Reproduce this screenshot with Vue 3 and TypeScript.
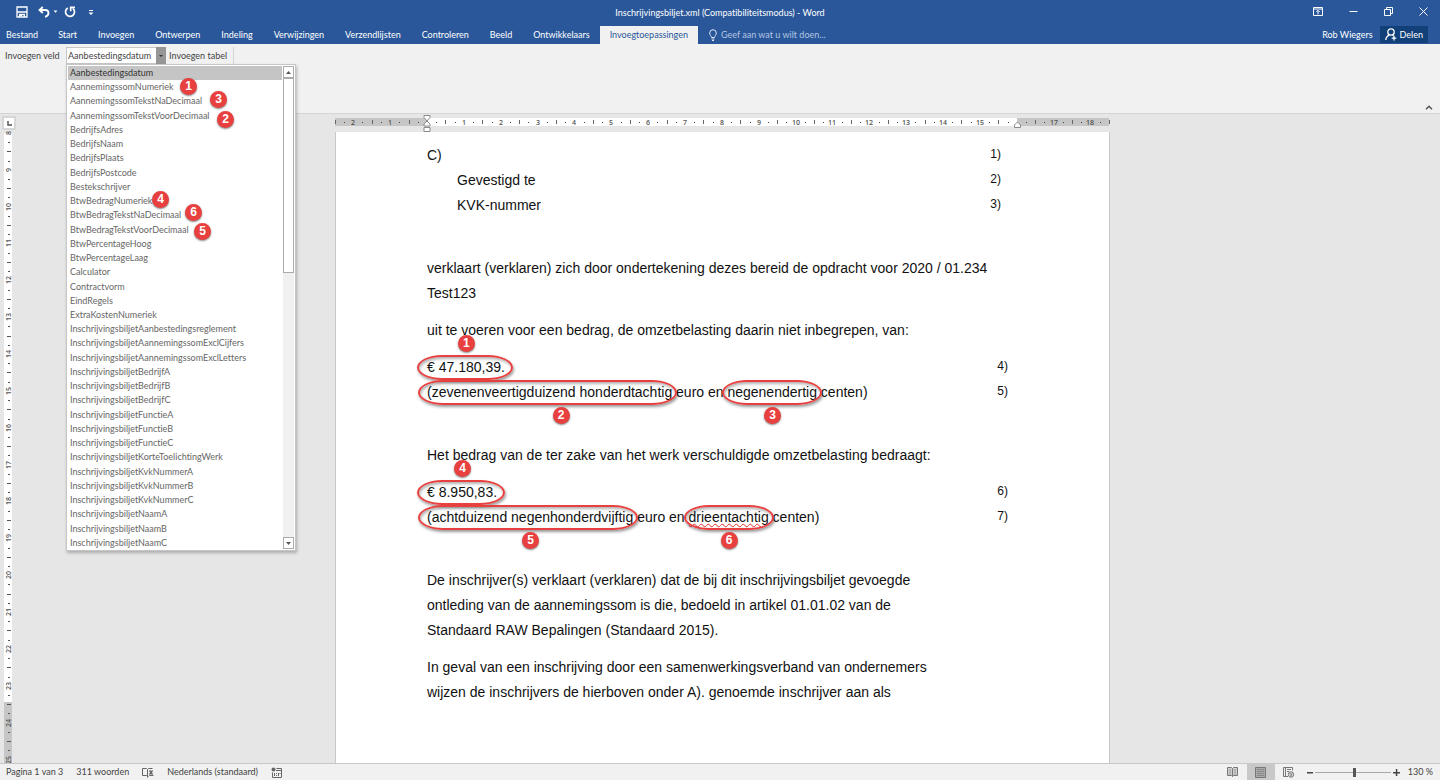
<script setup lang="ts">
import { ref } from 'vue'

interface Badge {
  n: number
  x: number
  y: number
}
interface Field {
  name: string
  badge?: Badge
}

const tabs: string[] = [
  'Bestand', 'Start', 'Invoegen', 'Ontwerpen', 'Indeling', 'Verwijzingen',
  'Verzendlijsten', 'Controleren', 'Beeld', 'Ontwikkelaars', 'Invoegtoepassingen',
]
const activeTab = ref('Invoegtoepassingen')

const fields: Field[] = [
  { name: 'Aanbestedingsdatum' },
  { name: 'AannemingssomNumeriek', badge: { n: 1, x: 112, y: -1 } },
  { name: 'AannemingssomTekstNaDecimaal', badge: { n: 3, x: 142, y: -2 } },
  { name: 'AannemingssomTekstVoorDecimaal', badge: { n: 2, x: 149, y: 3 } },
  { name: 'BedrijfsAdres' },
  { name: 'BedrijfsNaam' },
  { name: 'BedrijfsPlaats' },
  { name: 'BedrijfsPostcode' },
  { name: 'Bestekschrijver' },
  { name: 'BtwBedragNumeriek', badge: { n: 4, x: 84, y: -2 } },
  { name: 'BtwBedragTekstNaDecimaal', badge: { n: 6, x: 117, y: -3 } },
  { name: 'BtwBedragTekstVoorDecimaal', badge: { n: 5, x: 126, y: 1 } },
  { name: 'BtwPercentageHoog' },
  { name: 'BtwPercentageLaag' },
  { name: 'Calculator' },
  { name: 'Contractvorm' },
  { name: 'EindRegels' },
  { name: 'ExtraKostenNumeriek' },
  { name: 'InschrijvingsbiljetAanbestedingsreglement' },
  { name: 'InschrijvingsbiljetAannemingssomExclCijfers' },
  { name: 'InschrijvingsbiljetAannemingssomExclLetters' },
  { name: 'InschrijvingsbiljetBedrijfA' },
  { name: 'InschrijvingsbiljetBedrijfB' },
  { name: 'InschrijvingsbiljetBedrijfC' },
  { name: 'InschrijvingsbiljetFunctieA' },
  { name: 'InschrijvingsbiljetFunctieB' },
  { name: 'InschrijvingsbiljetFunctieC' },
  { name: 'InschrijvingsbiljetKorteToelichtingWerk' },
  { name: 'InschrijvingsbiljetKvkNummerA' },
  { name: 'InschrijvingsbiljetKvkNummerB' },
  { name: 'InschrijvingsbiljetKvkNummerC' },
  { name: 'InschrijvingsbiljetNaamA' },
  { name: 'InschrijvingsbiljetNaamB' },
  { name: 'InschrijvingsbiljetNaamC' },
]
const selected = ref('Aanbestedingsdatum')
const zoom = ref(52)

// One centimetre on the rulers at the current zoom level.
const CM = 36.86

interface Tick {
  pos: number
  kind: 'label' | 'half' | 'dot'
  text: string
}

function ticks(from: number, to: number, origin: number, skip: number[]): Tick[] {
  const out: Tick[] = []
  for (let q = from * 4; q <= to * 4; q++) {
    const value = q / 4
    if (skip.includes(value)) continue
    const kind = q % 4 === 0 ? 'label' : q % 2 === 0 ? 'half' : 'dot'
    out.push({ pos: Math.round(origin + value * CM), kind, text: String(Math.abs(value)) })
  }
  return out
}

const hTicks = ticks(-2.5, 18.5, 92, [0, 16])
const vTicks = ticks(8, 25, -295, [])
</script>

<template>
  <div class="app">
    <header class="chrome">
      <div class="titlebar">
        <div class="quick">
          <button aria-label="Opslaan">
            <svg width="12" height="12" viewBox="0 0 12 12" fill="none" stroke="#fff" stroke-width="1.3">
              <path d="M1 1h10v10H1zM1 6h10" /><path d="M3.600 11V8.500h4.800V11" /><path d="M4 9.500h2" />
            </svg>
          </button>
          <button aria-label="Ongedaan maken" class="undo">
            <svg width="20" height="12" viewBox="0 0 20 12" fill="none" stroke="#fff" stroke-width="1.800">
              <path d="M4.800 1L1.500 4l3.300 3M1.800 4h5.500c2 0 3.200 1.300 3.200 3 0 2-1.500 3.300-3.500 3.800" />
              <path d="M15.500 4.500h4l-2 2.200z" fill="#fff" stroke="none" />
            </svg>
          </button>
          <button aria-label="Opnieuw">
            <svg width="12" height="12" viewBox="0 0 12 12" fill="none" stroke="#fff" stroke-width="1.700">
              <path d="M3.800 1.900a4.500 4.500 0 1 0 5 .4" /><path d="M6.700 5.200V1.300h4.300" />
            </svg>
          </button>
          <button aria-label="Werkbalk aanpassen" class="more">
            <svg width="6" height="6" viewBox="0 0 6 6" fill="#fff"><path d="M1 0h4v1H1zM.5 2.500h5L3 5z" /></svg>
          </button>
        </div>
        <h1>Inschrijvingsbiljet.xml (Compatibiliteitsmodus) - Word</h1>
        <div class="window">
          <button aria-label="Weergaveopties voor lint">
            <svg width="10" height="9" viewBox="0 0 10 9" fill="none" stroke="#fff">
              <path d="M.5.5h9v8h-9zM.5 2h9M5 7.500V3.500M3.300 5L5 3.300 6.700 5" />
            </svg>
          </button>
          <button aria-label="Minimaliseren">
            <svg width="9" height="9" viewBox="0 0 9 9" stroke="#fff"><path d="M.5 4.500h8" /></svg>
          </button>
          <button aria-label="Verkleinen">
            <svg width="9" height="9" viewBox="0 0 9 9" fill="none" stroke="#fff">
              <path d="M.5 2.500h6v6h-6zM2.500 2.500v-2h6v6h-2" />
            </svg>
          </button>
          <button aria-label="Sluiten">
            <svg width="9" height="9" viewBox="0 0 9 9" stroke="#fff"><path d="M.5.5l8 8M8.500.5l-8 8" /></svg>
          </button>
        </div>
      </div>
      <nav class="tabs">
        <button v-for="t in tabs" :key="t" :class="{ active: t === activeTab }" @click="activeTab = t">{{ t }}</button>
        <label class="tellme">
          <svg width="8" height="12" viewBox="0 0 8 12" fill="none" stroke="#dbe4f2">
            <path d="M2.500 8.500C2.500 7 .7 6.300.7 4a3.300 3.300 0 0 1 6.600 0c0 2.300-1.800 3-1.800 4.500zM2.500 10h3M3 11.500h2" />
          </svg>
          <input type="text" placeholder="Geef aan wat u wilt doen..." />
        </label>
        <button class="user">Rob Wiegers</button>
        <button class="share">
          <svg width="12" height="13" viewBox="0 0 12 13" fill="none" stroke="#fff" stroke-width="1.300">
            <circle cx="6" cy="4" r="3.200" /><path d="M.8 12c.2-2.600 1.500-4.200 3.500-4.900M7.500 7l1 .6M9 7.800v4.600M6.700 10.100h4.600" />
          </svg>
          Delen
        </button>
      </nav>
    </header>

    <section class="ribbon">
      <label for="field">Invoegen veld</label>
      <div class="combo">
        <select id="field" v-model="selected">
          <option v-for="f in fields" :key="f.name">{{ f.name }}</option>
        </select>
        <span class="drop"></span>
        <div class="popup">
          <ul role="listbox" aria-label="Velden">
            <li
              v-for="f in fields"
              :key="f.name"
              role="option"
              :aria-selected="f.name === selected"
              :class="{ chosen: f.name === selected }"
              @click="selected = f.name"
            >
              {{ f.name }}
              <span v-if="f.badge" class="badge" :style="{ left: f.badge.x + 'px', top: f.badge.y - 1 + 'px' }">{{ f.badge.n }}</span>
            </li>
          </ul>
          <div class="scroll">
            <button aria-label="Omhoog"><svg width="5" height="3" viewBox="0 0 5 3"><path d="M0 3h5L2.500 0z" fill="#555" /></svg></button>
            <div class="thumb"></div>
            <button aria-label="Omlaag"><svg width="5" height="3" viewBox="0 0 5 3"><path d="M0 0h5L2.500 3z" fill="#555" /></svg></button>
          </div>
        </div>
      </div>
      <button class="table-btn">Invoegen tabel</button>
      <button class="collapse" aria-label="Lint samenvouwen">
        <svg width="8" height="5" viewBox="0 0 8 5" fill="none" stroke="#555" stroke-width="1.500"><path d="M1 4.300l3-3 3 3" /></svg>
      </button>
    </section>

    <main class="work">
      <aside class="side">
        <button class="tabstop" aria-label="Tabstop">
          <svg width="5" height="5" viewBox="0 0 5 5" fill="none" stroke="#555" stroke-width="1.500"><path d="M1 0v4h4" /></svg>
        </button>
        <svg class="vruler" width="9" height="100%">
          <rect x="0" y="0" width="8" height="569" fill="#fff" />
          <rect x="0" y="569" width="8" height="100" fill="#c6c6c6" />
          <template v-for="t in vTicks" :key="t.pos">
            <text v-if="t.kind === 'label'" :transform="`translate(7 ${t.pos}) rotate(-90)`" text-anchor="middle">{{ t.text }}</text>
            <rect v-else-if="t.kind === 'half'" x="3" :y="t.pos" width="4" height="1" fill="#555" />
            <rect v-else x="4" :y="t.pos" width="2" height="1" fill="#555" />
          </template>
        </svg>
      </aside>
      <div class="stage">
        <svg class="hruler" width="775" height="18" viewBox="0 0 775 18">
          <rect x="0" y="4" width="92" height="8" fill="#c6c6c6" />
          <rect x="92" y="4" width="590" height="8" fill="#fff" />
          <rect x="682" y="4" width="92" height="8" fill="#c6c6c6" />
          <template v-for="t in hTicks" :key="t.pos">
            <text v-if="t.kind === 'label'" :x="t.pos" y="11" text-anchor="middle">{{ t.text }}</text>
            <rect v-else-if="t.kind === 'half'" :x="t.pos" y="6" width="1" height="4" fill="#666" />
            <rect v-else :x="t.pos" y="8" width="1" height="1" fill="#444" />
          </template>
          <g fill="#fff" stroke="#8a8a8a">
            <path d="M89 1.500h6v2L92 7l3 3v2h-6v-2l3-3-3-3.500zM89 13.500h6v4h-6z" />
            <path d="M679.500 13.500v-2.500l3-3 3 3v2.500z" />
          </g>
        </svg>
        <article class="page">
          <section>
            <p><span>C)</span><span class="no near">1)</span></p>
            <p class="indent"><span>Gevestigd te</span><span class="no near">2)</span></p>
            <p class="indent"><span>KVK-nummer</span><span class="no near">3)</span></p>
          </section>
          <section class="far">
            <p>verklaart (verklaren) zich door ondertekening dezes bereid de opdracht voor 2020 / 01.234</p>
            <p>Test123</p>
          </section>
          <section>
            <p>uit te voeren voor een bedrag, de omzetbelasting daarin niet inbegrepen, van:</p>
          </section>
          <section>
            <p><span><mark class="amount">€ 47.180,39.<b class="badge above">1</b></mark></span><span class="no">4)</span></p>
            <p>
              <span><mark class="start">(zevenenveertigduizend honderdtachtig<b class="badge below aside">2</b></mark> euro en <mark>negenendertig<b class="badge below">3</b></mark> centen)</span>
              <span class="no">5)</span>
            </p>
          </section>
          <section class="far">
            <p>Het bedrag van de ter zake van het werk verschuldigde omzetbelasting bedraagt:</p>
          </section>
          <section>
            <p><span><mark class="amount">€ 8.950,83.<b class="badge above">4</b></mark></span><span class="no">6)</span></p>
            <p>
              <span><mark class="start">(achtduizend negenhonderdvijftig<b class="badge below">5</b></mark> euro en <mark><u>drieentachtig</u><b class="badge below">6</b></mark> centen)</span>
              <span class="no">7)</span>
            </p>
          </section>
          <section class="far">
            <p>De inschrijver(s) verklaart (verklaren) dat de bij dit inschrijvingsbiljet gevoegde</p>
            <p>ontleding van de aannemingssom is die, bedoeld in artikel 01.01.02 van de</p>
            <p>Standaard RAW Bepalingen (Standaard 2015).</p>
          </section>
          <section>
            <p>In geval van een inschrijving door een samenwerkingsverband van ondernemers</p>
            <p>wijzen de inschrijvers de hierboven onder A). genoemde inschrijver aan als</p>
          </section>
        </article>
      </div>
    </main>

    <footer class="status">
      <button>Pagina 1 van 3</button>
      <button>311 woorden</button>
      <button aria-label="Spellingcontrole">
        <svg width="12" height="11" viewBox="0 0 12 11" fill="none" stroke="#666">
          <path d="M5.500 9.500L4.500 8.500h-4v-7h4l1 1 1-1h4M5.500 2.500v8M6.500 9.500l1-1h4" /><path d="M7.500 3.500l3 4M10.500 3.500l-3 4" stroke-width="1.400" />
        </svg>
      </button>
      <button>Nederlands (standaard)</button>
      <button aria-label="Macro opnemen">
        <svg width="11" height="11" viewBox="0 0 11 11" fill="none" stroke="#666">
          <circle cx="2.500" cy="2.500" r="2" fill="#666" stroke="none" />
          <path d="M5.500 1.500h5v9h-9v-5M5 3.500h5.500M3.500 6v3M5.500 6v1M5.500 8v1M7.500 6v3M9 6v1" />
        </svg>
      </button>
      <div class="views">
        <button aria-label="Leesmodus">
          <svg width="11" height="10" viewBox="0 0 11 10" fill="#cfcfcf" stroke="#777">
            <path d="M5.500 1.500l-1-1h-4v8h4l1 1 1-1h4v-8h-4zM5.500 1.500v8" /><path d="M2 3h2M2 5h2M2 7h2M7 3h2M7 5h2M7 7h2" stroke="#999" />
          </svg>
        </button>
        <button aria-label="Afdrukweergave" class="on">
          <svg width="11" height="11" viewBox="0 0 11 11" fill="#aaa" stroke="#777">
            <path d="M.5.5h10v10H.5z" /><path d="M2 2.500h7M2 4.500h7M2 6.500h7M2 8.500h7" stroke="#888" />
          </svg>
        </button>
        <button aria-label="Weblay-out">
          <svg width="12" height="11" viewBox="0 0 12 11" fill="none" stroke="#777">
            <path d="M5 9.500H.5v-9h9v3M2.500 1v8M4 2.500h4M4 4.500h2" /><circle cx="8" cy="7.500" r="2.700" fill="#ddd" /><path d="M6.500 6l1.500 1.500 1.500-.5M8 7.500v2" />
          </svg>
        </button>
      </div>
      <div class="zoom">
        <button aria-label="Uitzoomen"><svg width="6" height="7" viewBox="0 0 6 7"><path d="M0 3h6v1.500H0z" fill="#444" /></svg></button>
        <input v-model="zoom" type="range" min="0" max="100" aria-label="Zoomen" />
        <button aria-label="Inzoomen"><svg width="7" height="7" viewBox="0 0 7 7"><path d="M0 3h7v1.500H0zM2.800 0h1.500v7H2.800z" fill="#444" /></svg></button>
        <button class="pct">130 %</button>
      </div>
    </footer>
  </div>
</template>

<style>
body {
  margin: 0;
}
</style>

<style scoped>
.app {
  display: flex;
  flex-direction: column;
  height: 100vh;
  overflow: hidden;
  background: #e6e6e6;
  font-family: Lato, "Open Sans", sans-serif;
  font-size: 9px;
  font-variant-ligatures: none;
  line-height: 14px;
  color: #444;
}
button {
  margin: 0;
  padding: 0;
  border: 0;
  background: none;
  font: inherit;
  font-variant-ligatures: none;
  color: inherit;
  white-space: nowrap;
}
svg {
  display: block;
}
.chrome {
  flex: none;
  background: #2a579a;
  color: #fff;
}
.titlebar {
  display: grid;
  grid-template-columns: 1fr auto 1fr;
  align-items: center;
  height: 26px;
}
.titlebar h1 {
  margin: 0;
  font-size: 9px;
  font-weight: 400;
}
.quick {
  display: flex;
  align-items: center;
  gap: 10px;
  padding: 0 0 3px 16px;
}
.undo {
  margin-right: -4px;
}
.more {
  margin: 3px 0 0 2px;
}
.window {
  display: flex;
  justify-content: flex-end;
  align-items: center;
  gap: 26px;
  padding: 0 12px 4px 0;
}
.tabs {
  display: flex;
  height: 18px;
}
.tabs > button {
  padding: 0 10px 0 11px;
}
.tabs > button:first-child {
  padding: 0 9px 0 6px;
}
.tabs > button.active {
  padding: 0 10px;
  background: #f1f1f1;
  color: #2a579a;
}
.tellme {
  display: flex;
  align-items: center;
  gap: 4px;
  flex: 1;
  padding-left: 11px;
}
.tellme input {
  width: 140px;
  padding: 0;
  border: 0;
  background: none;
  outline: none;
  font: inherit;
  color: #fff;
}
.tellme input::placeholder {
  color: #b4c6e2;
  opacity: 1;
}
.tabs > .user {
  padding: 0 7px;
}
.tabs > .share {
  display: flex;
  align-items: center;
  gap: 3px;
  margin: 0 12px 1px 0;
  padding: 0 5px;
  background: #124078;
}
.ribbon {
  display: flex;
  align-items: flex-start;
  flex: none;
  height: 66px;
  padding: 3px 7px 0 5px;
  border-bottom: 1px solid #d5d5d5;
  background: #f1f1f1;
}
.ribbon > label {
  width: 61px;
  line-height: 17px;
}
.combo {
  position: relative;
  width: 100px;
  height: 17px;
}
.combo select {
  display: block;
  width: 100%;
  height: 17px;
  padding: 0 10px 0 1px;
  border: 1px solid #c6c6c6;
  border-radius: 0;
  appearance: none;
  background: #fff;
  font: inherit;
  color: #444;
}
.drop {
  position: absolute;
  top: 0;
  right: 0;
  width: 10px;
  height: 17px;
  background: #969696;
  pointer-events: none;
}
.drop::after {
  content: "";
  position: absolute;
  top: 8px;
  left: 3px;
  border: 2px solid transparent;
  border-top-color: #333;
}
.popup {
  position: absolute;
  z-index: 5;
  top: 17px;
  left: 0;
  display: flex;
  width: 228px;
  border: 1px solid #c6c6c6;
  background: #fff;
  box-shadow: 1px 2px 3px rgba(0, 0, 0, 0.25);
}
.popup ul {
  display: grid;
  grid-auto-rows: 1fr;
  flex: 1;
  height: 484px;
  margin: 0;
  padding: 1px 0 0 1px;
  list-style: none;
}
.popup li {
  position: relative;
  padding-left: 2px;
  color: #666;
}
.popup li.chosen {
  background: #c5c5c5;
  color: #333;
}
.scroll {
  display: flex;
  flex-direction: column;
  width: 11px;
  margin: 1px;
  background: #f0f0f0;
}
.scroll button {
  display: flex;
  align-items: center;
  justify-content: center;
  height: 12px;
  border: 1px solid #ababab;
  background: #fff;
}
.scroll button:last-child {
  margin-top: auto;
}
.thumb {
  height: 40%;
  border: 1px solid #ababab;
  background: #fff;
}
.badge {
  position: absolute;
  z-index: 2;
  width: 17px;
  height: 17px;
  border-radius: 50%;
  background: #e8403f;
  box-shadow: 0 1px 2px rgba(0, 0, 0, 0.5);
  color: #fff;
  font: 700 12px/17px "Liberation Sans", Arial, sans-serif;
  text-align: center;
}
.table-btn {
  height: 17px;
  padding: 0 6px 0 3px;
  border-right: 1px solid #d5d5d5;
}
.collapse {
  align-self: flex-end;
  margin: 0 0 3px auto;
}
.work {
  display: flex;
  flex: 1;
  min-height: 0;
  padding-right: 7px;
  overflow: hidden;
}
.side {
  display: flex;
  flex-direction: column;
  width: 12px;
}
.tabstop {
  display: flex;
  align-items: center;
  justify-content: center;
  flex: none;
  width: 14px;
  height: 14px;
  margin: 2px 0 3px 2px;
  border: 2px solid #d6d6d6;
  background: #fff;
}
.vruler {
  flex: 1;
  min-height: 0;
  margin-left: 4px;
  overflow: visible;
}
.vruler text,
.hruler text {
  font: 600 7px "Open Sans", sans-serif;
  fill: #555;
}
.stage {
  display: flex;
  flex-direction: column;
  width: 775px;
  margin: 0 auto;
}
.hruler {
  flex: none;
}
.page {
  flex: 1;
  padding: 11px 101px 0 91px;
  border-left: 1px solid #c8c8c8;
  border-right: 1px solid #c8c8c8;
  background: #fff;
  color: #111;
  font: 14px/25px "Liberation Sans", Arial, sans-serif;
}
.page section {
  margin-top: 12px;
}
.page section:first-child {
  margin-top: 0;
}
.page section.far {
  margin-top: 38px;
}
.page p {
  display: flex;
  justify-content: space-between;
  margin: 0;
  white-space: nowrap;
}
.page .indent {
  padding-left: 30px;
}
.no {
  font-size: 12px;
  line-height: 23px;
}
.near {
  margin-right: 7px;
}
mark {
  position: relative;
  display: inline-block;
  background: none;
  color: inherit;
}
mark::before {
  content: "";
  position: absolute;
  inset: 0 -5px;
  border: 2px solid #e8403f;
  border-radius: 26px / 13px;
  box-shadow: 1px 2px 3px rgba(0, 0, 0, 0.4), inset 1px 2px 3px rgba(0, 0, 0, 0.3);
}
mark.start::before {
  left: -9px;
}
mark.amount::before {
  inset: 0 -8px 0 -10px;
}
mark u {
  text-decoration: underline wavy #e03030 1px;
  text-underline-offset: 1px;
}
.above,
.below {
  left: 50%;
  margin-left: -8px;
}
.above {
  top: -20px;
}
.below {
  top: 27px;
}
.aside {
  margin-left: 3px;
}
.status {
  display: flex;
  align-items: center;
  flex: none;
  gap: 13px;
  height: 16px;
  padding: 0 7px 0 6px;
  border-top: 1px solid #c8c8c8;
  background: #f1f1f1;
}
.views {
  display: flex;
  align-self: stretch;
  margin-left: auto;
}
.views button {
  display: flex;
  align-items: center;
  justify-content: center;
  width: 28px;
}
.views .on {
  background: #c8c8c8;
}
.zoom {
  display: flex;
  align-items: center;
  gap: 2px;
  margin-left: -9px;
}
.zoom input {
  width: 76px;
  height: 10px;
  margin: 0;
  appearance: none;
  background: linear-gradient(#a8a8a8, #a8a8a8) center / 100% 1px no-repeat;
}
.zoom input::-webkit-slider-thumb {
  appearance: none;
  width: 3px;
  height: 9px;
  background: #555;
}
.pct {
  margin-left: 6px;
}
</style>
